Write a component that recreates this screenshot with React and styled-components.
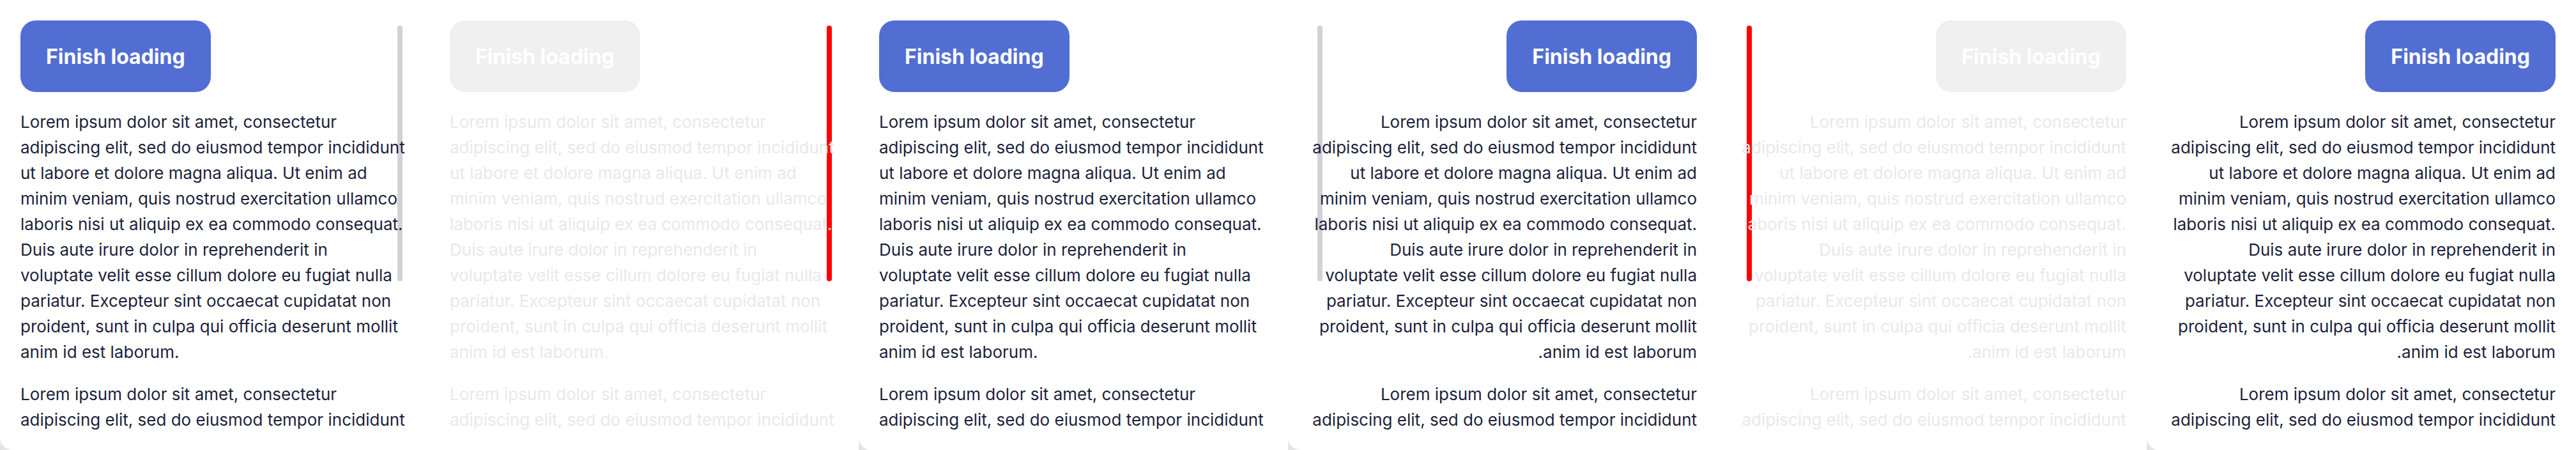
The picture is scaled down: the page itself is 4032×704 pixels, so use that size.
import React from "react";
import styled, { createGlobalStyle } from "styled-components";

const GlobalStyle = createGlobalStyle`
  * { box-sizing: border-box; }
  body { margin: 0; background: #fff; font-family: Inter, "Noto Sans", sans-serif; }
`;

const Strip = styled.main`
  display: grid;
  grid-template-columns: repeat(6, minmax(0, 1fr));
  height: 100vh;
`;

const Backdrop = styled.section`
  display: flex;
  min-width: 0;
  min-height: 0;
  background: ${(p) =>
    p.$muted
      ? "#fff"
      : "linear-gradient(45deg, #e2e2e2, #f4f4f4) left bottom / 20px 20px no-repeat, #fff"};
`;

const Sheet = styled.div`
  position: relative;
  flex: 1;
  display: flex;
  min-width: 0;
  padding: 32px;
  background: #fff;
  border-radius: 0 0 0 20px;
`;

const Scroller = styled.div`
  position: relative;
  flex: 1;
  min-width: 0;
  overflow-x: hidden;
  overflow-y: auto;
  scrollbar-width: none;
`;

const Thumb = styled.span`
  position: absolute;
  top: 40px;
  inset-inline-end: ${(p) => (p.$rtl ? "46px" : "42px")};
  width: 8px;
  height: 400px;
  border-radius: 4px;
  background: ${(p) => (p.$muted ? "#f00" : "#d1d1d6")};
`;

const Action = styled.button`
  display: block;
  height: 112px;
  margin: 0 0 27px;
  padding: 2px 40px 0;
  border: 0;
  border-radius: 24px;
  background: ${(p) => (p.$muted ? "#f0f0f0" : "#526ed3")};
  color: #fff;
  font: 700 32px/40px Inter, "Noto Sans", sans-serif;
  white-space: nowrap;
`;

const Copy = styled.p`
  margin: 0 0 26px;
  color: ${(p) => (p.$muted ? "#e9e9e9" : "#1c1f3b")};
  font-size: 26px;
  line-height: 40px;
  white-space: pre-line;
`;

const LOREM = `Lorem ipsum dolor sit amet, consectetur adipiscing elit, sed do eiusmod tempor incididunt ut labore et dolore magna aliqua. Ut enim ad minim veniam, quis nostrud exercitation ullamco laboris nisi ut aliquip ex ea commodo consequat. Duis aute irure dolor in reprehenderit in
voluptate velit esse cillum dolore eu fugiat nulla
pariatur. Excepteur sint occaecat cupidatat non
proident, sunt in culpa qui officia deserunt mollit
anim id est laborum.`;

const PANELS = [
  { dir: "ltr", thumb: true },
  { dir: "ltr", thumb: true, muted: true },
  { dir: "ltr" },
  { dir: "rtl", thumb: true },
  { dir: "rtl", thumb: true, muted: true },
  { dir: "rtl" },
];

function Panel({ dir, thumb, muted }) {
  return (
    <Backdrop dir={dir} $muted={muted}>
      <Sheet>
        {thumb && <Thumb $rtl={dir === "rtl"} $muted={muted} />}
        <Scroller>
          <Action type="button" $muted={muted}>Finish loading</Action>
          <Copy $muted={muted}>{LOREM}</Copy>
          <Copy $muted={muted}>{LOREM}</Copy>
        </Scroller>
      </Sheet>
    </Backdrop>
  );
}

export default function App() {
  return (
    <>
      <GlobalStyle />
      <Strip>
        {PANELS.map((panel, i) => (
          <Panel key={i} {...panel} />
        ))}
      </Strip>
    </>
  );
}
